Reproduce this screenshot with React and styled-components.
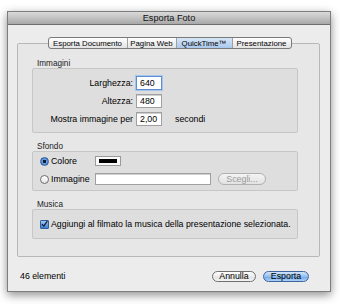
import React from "react";
import styled, { createGlobalStyle } from "styled-components";

const Global = createGlobalStyle`
  html, body {
    margin: 0;
    background: #fff;
  }
  body {
    font-family: "Liberation Sans", Arial, sans-serif;
    font-size: 8.8px;
    color: #000;
  }
`;

const Page = styled.div`
  width: 340px;
  height: 304px;
  padding: 11px 0 0 7px;
  box-sizing: border-box;
`;

const Window = styled.div`
  width: 324px;
  height: 281px;
  box-sizing: border-box;
  border: 1px solid #7d7d7d;
  background: #ececec;
  box-shadow: 0 3px 9px rgba(0, 0, 0, 0.45);
  display: flex;
  flex-direction: column;
`;

const TitleBar = styled.div`
  height: 12px;
  flex: none;
  background: linear-gradient(#dadada, #a8a8a8);
  border-bottom: 1px solid #6e6e6e;
  display: flex;
  align-items: center;
  justify-content: center;
  font-size: 9.2px;
  color: #111;
`;

const Body = styled.div`
  flex: 1;
  display: flex;
  flex-direction: column;
  padding: 12px 10px 0 9px;
`;

const Tabs = styled.div`
  align-self: center;
  display: flex;
  height: 10px;
  margin-left: 2px;
  border: 1px solid #7a7a7a;
  border-radius: 3px;
  overflow: hidden;
  background: linear-gradient(#ffffff, #e2e2e2);
  position: relative;
  z-index: 1;
  margin-bottom: -6px;
`;

const Tab = styled.div`
  width: ${({ w }) => w}px;
  display: flex;
  align-items: center;
  justify-content: center;
  font-size: 7.8px;
  color: #000;
  border-left: ${({ first }) => (first ? "none" : "1px solid #a0a0a0")};
  background: ${({ active }) =>
    active ? "linear-gradient(#d6e6f8, #a9c8ec)" : "transparent"};
`;

const Panel = styled.div`
  height: 214px;
  box-sizing: border-box;
  border: 1px solid #b8b8b8;
  border-radius: 2px;
  background: #e7e7e7;
  padding: 15px 21px 0 14px;
  display: flex;
  flex-direction: column;
  gap: 9px;
`;

const Group = styled.div`
  display: flex;
  flex-direction: column;
`;

const GroupTitle = styled.div`
  height: 9px;
  line-height: 9px;
  padding-left: 5px;
  font-size: 8.2px;
  color: #222;
`;

const GroupBox = styled.div`
  height: ${({ h }) => h}px;
  box-sizing: border-box;
  border: 1px solid #c6c6c6;
  border-radius: 2px;
  background: #dedede;
  padding: ${({ pad }) => pad};
  display: flex;
  flex-direction: column;
  gap: ${({ gap }) => gap || 0}px;
`;

const Row = styled.div`
  display: flex;
  align-items: center;
  height: ${({ h }) => h || 14}px;
`;

const Label = styled.div`
  width: 100px;
  text-align: right;
  padding-right: 3px;
`;

const Field = styled.div`
  width: ${({ w }) => w}px;
  height: ${({ h }) => h || 14}px;
  box-sizing: border-box;
  background: #fff;
  border: 1px solid ${({ focus }) => (focus ? "#5c8ed0" : "#a0a0a0")};
  box-shadow: ${({ focus }) => (focus ? "0 0 0 1px #a7c4ea" : "inset 0 1px 0 #d0d0d0")};
  display: flex;
  align-items: center;
  padding-left: 3px;
`;

const Unit = styled.div`
  margin-left: 13px;
`;

const Radio = styled.div`
  width: 9px;
  height: 9px;
  box-sizing: border-box;
  border-radius: 50%;
  border: 1px solid ${({ on }) => (on ? "#2f5e9c" : "#6d6d6d")};
  background: ${({ on }) =>
    on ? "radial-gradient(circle, #0d1d33 0 1.5px, #6b9ee0 2px, #2f6bc0)" : "linear-gradient(#fff, #e4e4e4)"};
  flex: none;
`;

const ChoiceLabel = styled.div`
  width: ${({ w }) => (w ? `${w}px` : "auto")};
  padding-left: 2px;
`;

const Swatch = styled.div`
  width: 26px;
  height: 10px;
  box-sizing: border-box;
  border: 1px solid #9a9a9a;
  background: #fafafa;
  padding: 2px 3px;
  display: flex;
  span {
    flex: 1;
    background: #000;
  }
`;

const Pill = styled.div`
  height: ${({ h }) => h || 11}px;
  width: ${({ w }) => w}px;
  box-sizing: border-box;
  border-radius: 6px;
  display: flex;
  align-items: center;
  justify-content: center;
  margin-left: ${({ ml }) => ml || 0}px;
  color: ${({ kind }) => (kind === "off" ? "#9a9a9a" : "#000")};
  border: 1px solid
    ${({ kind }) => (kind === "primary" ? "#3f659c" : kind === "off" ? "#b0b0b0" : "#6f6f6f")};
  background: ${({ kind }) =>
    kind === "primary"
      ? "linear-gradient(#d3e6fb, #93bff0 50%, #6ea5e6 51%, #a9d1fa)"
      : kind === "off"
      ? "linear-gradient(#f4f4f4, #e2e2e2)"
      : "linear-gradient(#ffffff, #ececec 50%, #dedede 51%, #f6f6f6)"};
`;

const Check = styled.div`
  width: 9px;
  height: 9px;
  box-sizing: border-box;
  border: 1px solid #2f5e9c;
  border-radius: 1px;
  background: linear-gradient(#a9c9f2, #3f7bcf);
  display: flex;
  align-items: center;
  justify-content: center;
  flex: none;
`;

const Footer = styled.div`
  flex: 1;
  display: flex;
  align-items: center;
  padding: 4px 11px 0 3px;
`;

const Count = styled.div`
  flex: 1;
`;

export default function App() {
  return (
    <Page>
      <Global />
      <Window>
        <TitleBar>Esporta Foto</TitleBar>
        <Body>
          <Tabs>
            <Tab first w={78}>Esporta Documento</Tab>
            <Tab w={48}>Pagina Web</Tab>
            <Tab w={55} active>QuickTime™</Tab>
            <Tab w={58}>Presentazione</Tab>
          </Tabs>
          <Panel>
            <Group>
              <GroupTitle>Immagini</GroupTitle>
              <GroupBox h={65} pad="7px 0 0 0" gap={4}>
                <Row>
                  <Label>Larghezza:</Label>
                  <Field w={26} focus>640</Field>
                </Row>
                <Row>
                  <Label>Altezza:</Label>
                  <Field w={26}>480</Field>
                </Row>
                <Row>
                  <Label>Mostra immagine per</Label>
                  <Field w={26}>2,00</Field>
                  <Unit>secondi</Unit>
                </Row>
              </GroupBox>
            </Group>
            <Group>
              <GroupTitle>Sfondo</GroupTitle>
              <GroupBox h={40} pad="3px 0 0 7px" gap={6}>
                <Row h={12}>
                  <Radio on />
                  <ChoiceLabel w={44}>Colore</ChoiceLabel>
                  <Swatch>
                    <span />
                  </Swatch>
                </Row>
                <Row h={12}>
                  <Radio />
                  <ChoiceLabel w={44}>Immagine</ChoiceLabel>
                  <Field w={116} h={12} />
                  <Pill kind="off" w={48} h={12} ml={7}>
                    Scegli...
                  </Pill>
                </Row>
              </GroupBox>
            </Group>
            <Group>
              <GroupTitle>Musica</GroupTitle>
              <GroupBox h={30} pad="0 0 0 7px">
                <Row h={28}>
                  <Check>
                    <svg width="8" height="8" viewBox="0 0 8 8">
                      <path d="M1 4.2 L3.2 6.4 L7.2 0.8" fill="none" stroke="#0b1a30" strokeWidth="1.4" />
                    </svg>
                  </Check>
                  <ChoiceLabel>
                    Aggiungi al filmato la musica della presentazione selezionata.
                  </ChoiceLabel>
                </Row>
              </GroupBox>
            </Group>
          </Panel>
          <Footer>
            <Count>46 elementi</Count>
            <Pill w={44}>Annulla</Pill>
            <Pill kind="primary" w={46} ml={7}>
              Esporta
            </Pill>
          </Footer>
        </Body>
      </Window>
    </Page>
  );
}
